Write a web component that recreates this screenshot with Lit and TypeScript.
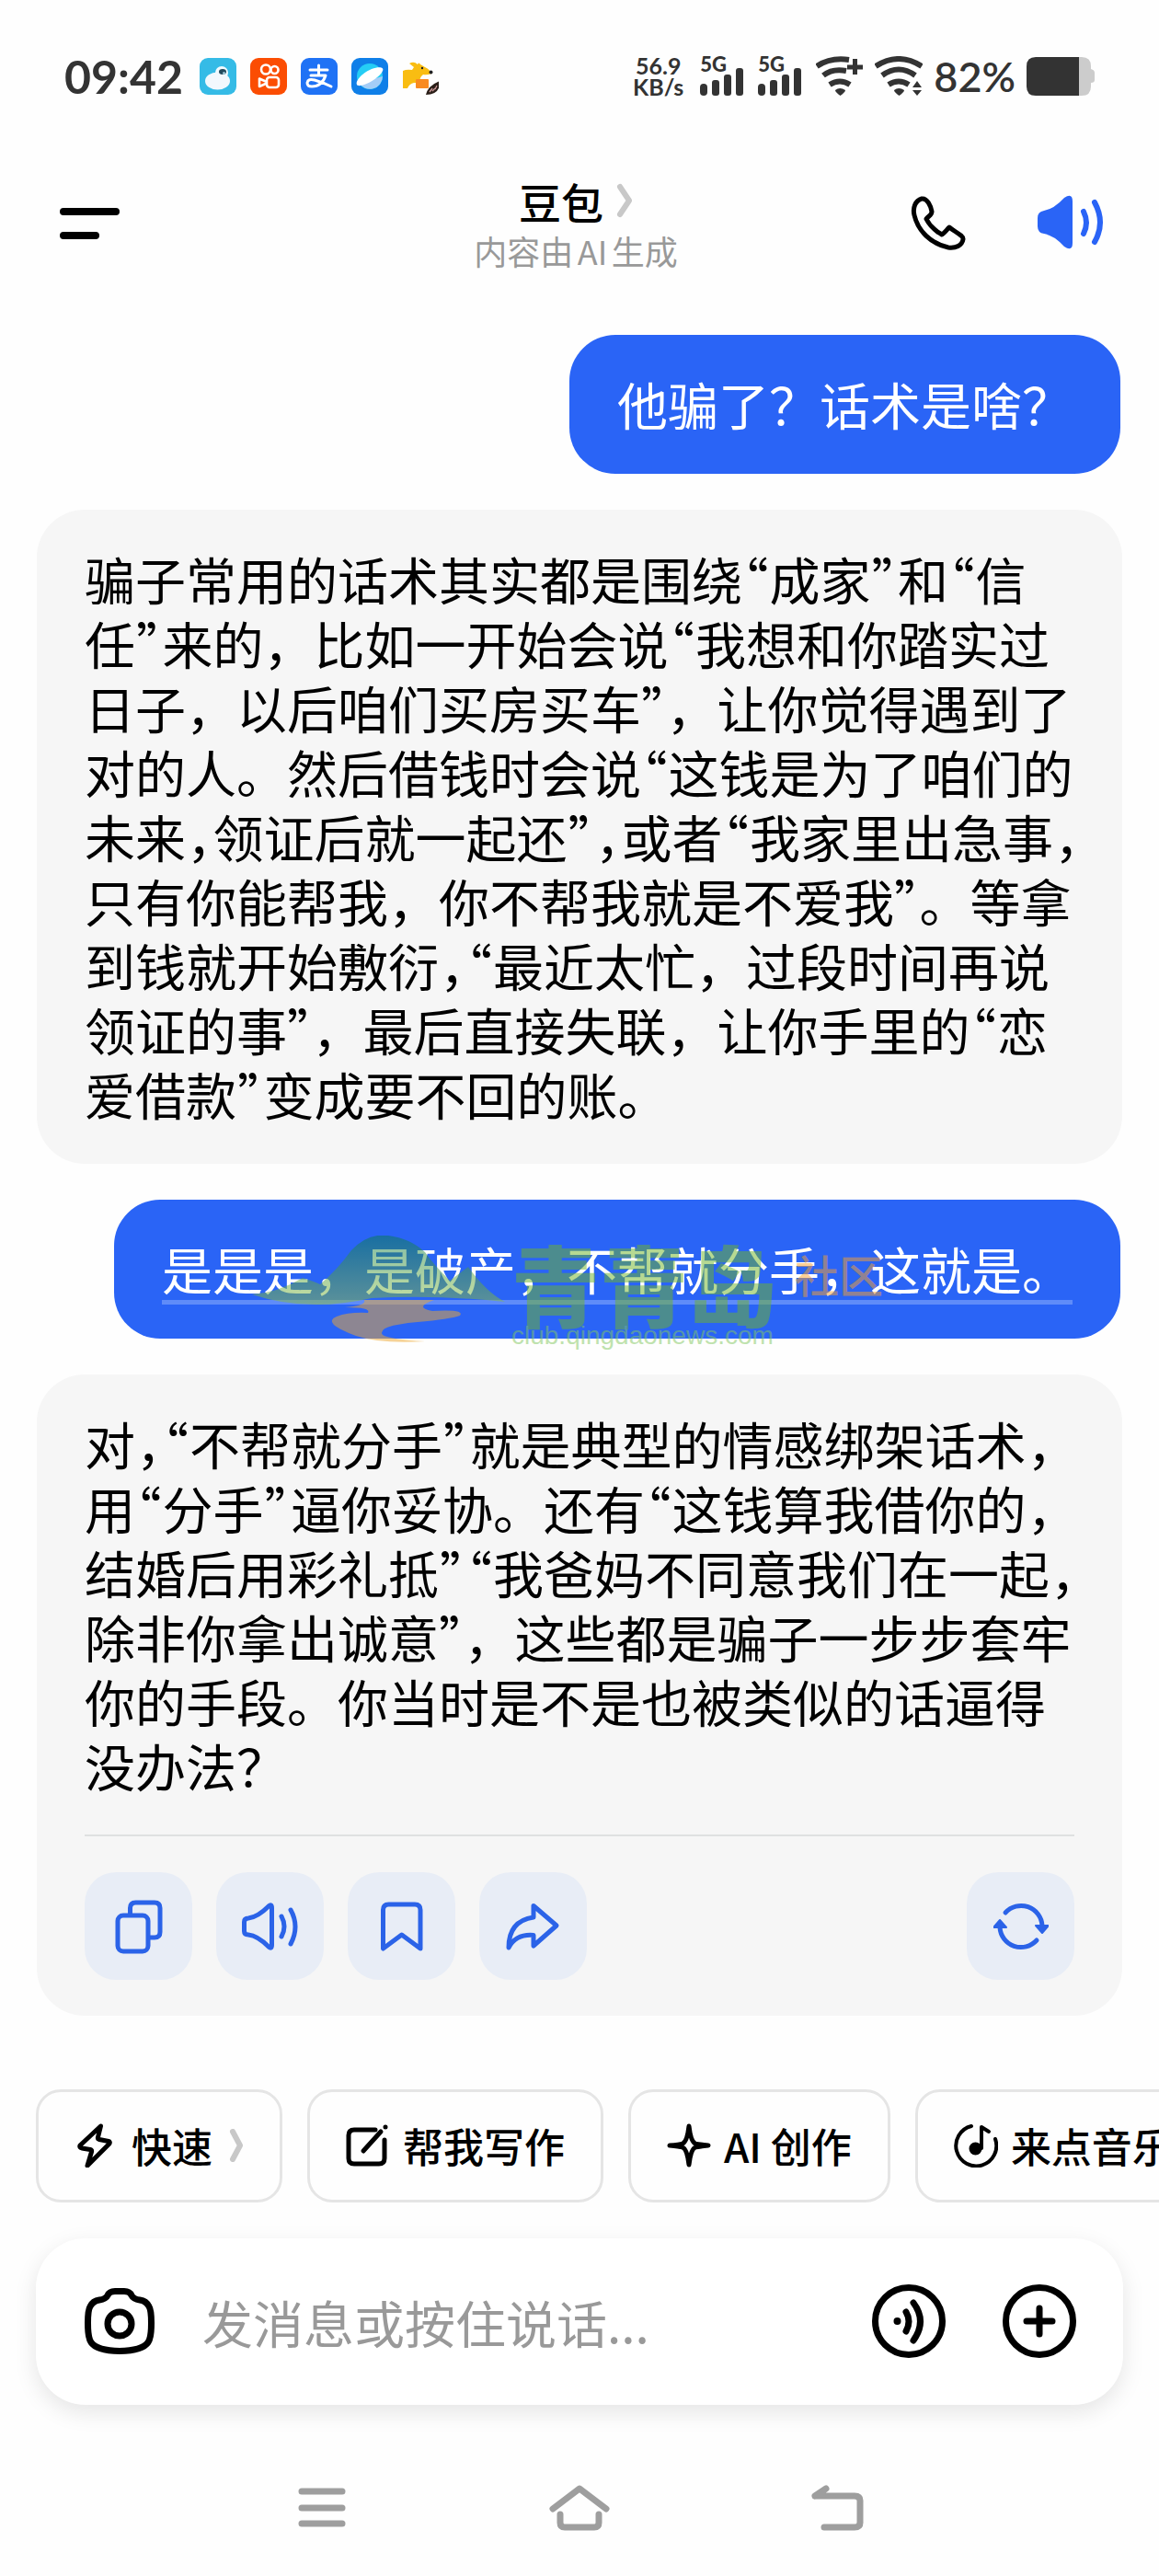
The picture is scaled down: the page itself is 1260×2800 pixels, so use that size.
import { LitElement, html, css, svg, nothing } from "lit";
import { customElement, property } from "lit/decorators.js";

type Message = { from: "me" | "bot"; text: string; actions?: boolean; marked?: boolean };

/* {，} marks a comma set at half width; curly quotes are always half width. */
const messages: Message[] = [
  { from: "me", text: "他骗了？话术是啥？" },
  {
    from: "bot",
    text: [
      "骗子常用的话术其实都是围绕“成家”和“信",
      "任”来的，比如一开始会说“我想和你踏实过",
      "日子，以后咱们买房买车”，让你觉得遇到了",
      "对的人。然后借钱时会说“这钱是为了咱们的",
      "未来{，}领证后就一起还”{，}或者“我家里出急事{，}",
      "只有你能帮我，你不帮我就是不爱我”。等拿",
      "到钱就开始敷衍{，}“最近太忙，过段时间再说",
      "领证的事”，最后直接失联，让你手里的“恋",
      "爱借款”变成要不回的账。",
    ].join("\n"),
  },
  { from: "me", text: "是是是，是破产，不帮就分手，这就是。", marked: true },
  {
    from: "bot",
    actions: true,
    text: [
      "对{，}“不帮就分手”就是典型的情感绑架话术{，}",
      "用“分手”逼你妥协。还有“这钱算我借你的{，}",
      "结婚后用彩礼抵”“我爸妈不同意我们在一起{，}",
      "除非你拿出诚意”，这些都是骗子一步步套牢",
      "你的手段。你当时是不是也被类似的话逼得",
      "没办法？",
    ].join("\n"),
  },
];

const sharedType = css`
  :host {
    font-family: "Noto Sans CJK SC", sans-serif;
    text-spacing-trim: space-all;
    text-autospace: no-autospace;
  }
  button {
    font: inherit;
    color: inherit;
    background: none;
    border: 0;
    margin: 0;
    padding: 0;
    display: flex;
    align-items: center;
    justify-content: center;
  }
  svg {
    display: block;
    flex: none;
  }
`;

const line = (d: unknown, w: number, h: number, stroke: number) => html`
  <svg width=${w} height=${h} viewBox="0 0 ${w} ${h}" fill="none" stroke="currentColor"
    stroke-width=${stroke} stroke-linecap="round" stroke-linejoin="round" aria-hidden="true">${d}</svg>`;

const icons = {
  menu: line(svg`<path d="M4 6H61M4 32H39"/>`, 66, 36, 8),
  chevron: line(svg`<path d="M4 4L14 19L4 34"/>`, 18, 38, 6),
  chevronSmall: line(svg`<path d="M4 3L12 18L4 33"/>`, 16, 36, 6),
  phone: line(svg`<path d="M12 4C5 6 2 14 4 22C8 39 22 53 41 57C49 58 56 55 57 48C57.500 44 48 40 42 35C39 38 37 41 34 43C27 39 20 32 17 26C19 23 23 22 23 18C22 12 18 3 12 4Z"/>`, 60, 60, 5),
  soundOn: line(svg`<path d="M0 25Q0 18 7 17Q18 15 29 3Q38 -3 38 7V52Q38 62 29 56Q18 44 7 42Q0 41 0 34Z" fill="currentColor" stroke="none"/><path d="M50 18Q56 30 50 42M62 8Q74 30 62 51"/>`, 72, 60, 6),
  copy: line(svg`<path d="M20.500 16V10Q20.500 4 26.500 4H47Q53 4 53 10V36Q53 42 47 42H42"/><rect x="7" y="18" width="33" height="39" rx="6"/>`, 60, 60, 5),
  sound: line(svg`<path d="M2.500 25Q2.500 21 7 21Q17 20 29 8Q32.500 5 32.500 10V50Q32.500 55 29 52Q17 40 7 39Q2.500 39 2.500 35Z"/><path d="M43 19Q49 30 43 41M53 12Q63 30 53 49"/>`, 62, 60, 5),
  bookmark: line(svg`<path d="M9.500 54V12Q9.500 6 15.500 6H44Q50 6 50 12V54L29.700 39Z"/>`, 60, 60, 5),
  share: line(svg`<path d="M30 7.500L55 29L30 51V39.500Q11 38 3 53Q3 24 30 20Z"/>`, 60, 60, 5),
  refresh: line(svg`<path d="M13 15A23 23 0 0 1 53 29M7 31A23 23 0 0 0 47 45"/><path d="M46 29H60L53 37ZM0 31H14L7 23Z" fill="currentColor" stroke-width="2"/>`, 60, 60, 5),
  bolt: line(svg`<path d="M28.500 3L6 24Q5 26 8 27L17 28.500Q19 29 18.500 31L14 46L38 22Q39 20 37 19.500L27 17.500Q25 17 25.500 15Z"/>`, 48, 48, 5),
  edit: line(svg`<path d="M32 7H9Q3 7 3 13V38Q3 44 9 44H36Q42 44 42 38V18"/><path d="M19 30L38 9M43 4V4"/>`, 48, 48, 5),
  spark: line(svg`<path d="M24 3Q26 20 31 22Q34 23 45 24Q34 25 31 26Q26 28 24 45Q22 28 17 26Q14 25 3 24Q14 23 17 22Q22 20 24 3Z"/>`, 48, 48, 5),
  music: line(svg`<path d="M19 3A22 22 0 1 0 45 17"/><path d="M30 27V4L38 9"/><circle cx="23.500" cy="27.500" r="5" fill="currentColor"/>`, 48, 48, 4),
  camera: line(svg`<path d="M5.500 42Q5.500 28 8 24Q11 18 18 17Q25 16 27 12Q29 7.500 35 7.500H45Q51 7.500 53 12Q55 16 62 17Q69 18 72 24Q74.500 28 74.500 42Q74.500 58 71 63Q65 72 40 72.500Q15 72 9 63Q5.500 58 5.500 42Z"/><circle cx="40" cy="43" r="13"/>`, 80, 80, 7),
  voice: line(svg`<circle cx="40" cy="40" r="36.500"/><circle cx="27.500" cy="40" r="4" fill="currentColor" stroke="none"/><path d="M37 30Q43 40 37 51M45 20Q60 40 45 61"/>`, 80, 80, 7),
  plus: line(svg`<circle cx="40" cy="40" r="36.500"/><path d="M26 40H54M40 26V54"/>`, 80, 80, 7),
  recents: line(svg`<path d="M5 6H49M5 24H49M5 41H49"/>`, 54, 48, 7),
  home: line(svg`<path d="M4 26L33 4L62 26M12 32V41Q12 46 17 46H49Q54 46 54 41V32"/>`, 66, 50, 7),
  back: line(svg`<path d="M4 12H47Q53 12 53 17V41Q53 46 47 46H14M4 12L16 4"/>`, 57, 50, 7),
};

const appIcon = (label: string, body: unknown) => html`
  <svg width="40" height="40" viewBox="0 0 40 40" role="img" aria-label=${label}>${body}</svg>`;

const appIcons = [
  appIcon("云宠", svg`<rect width="40" height="40" rx="9" fill="#35bbe6"/><circle cx="24" cy="16" r="7" fill="#f2fbff"/><ellipse cx="19.500" cy="25" rx="13.500" ry="9.500" fill="#f2f8fd"/><ellipse cx="25" cy="15" rx="4" ry="3" fill="#21495c"/><circle cx="26.500" cy="16.500" r="1.500" fill="#9fc9d8"/>`),
  appIcon("快手", svg`<rect width="40" height="40" rx="9" fill="#fb4d03"/><g fill="none" stroke="#fff" stroke-width="2.600" stroke-linejoin="round"><circle cx="17" cy="12.500" r="5"/><circle cx="26.500" cy="13" r="4"/><rect x="18" y="21" width="13" height="11" rx="3"/><path d="M18 26L10 22.500V31L18 27.500"/></g>`),
  appIcon("支付", svg`<rect width="40" height="40" rx="9" fill="#1f72f5"/><path d="M10 13H29M19.500 8V19M11 19H27Q23 31 12 31Q7 31 7 27Q8 22 15 24Q25 27 33 31" fill="none" stroke="#fff" stroke-width="3" stroke-linecap="round" stroke-linejoin="round"/>`),
  appIcon("浏览器", svg`<rect width="40" height="40" rx="9" fill="#0f7fe8"/><circle cx="20" cy="20" r="14" fill="#25cdf5"/><path d="M34 20A14 14 0 0 1 8 27Z" fill="#a4cdf7"/><path d="M6 29C4 24 14 15 22 12C30 9 36 10 34 14C32 20 20 27 14 29C10 30 7 31 6 29Z" fill="#fff"/>`),
  appIcon("袋鼠", svg`<path d="M1 14Q5 12 11 13L13 10L8 6Q13 3 17 7Q18 4 20 7L25 10Q31 13 32 17Q27 19 23 18Q18 22 20 27H13Q8 28 6 33H1Z" fill="#f9bd12"/><rect x="15" y="23" width="14" height="10" rx="1" fill="#f98a20"/><circle cx="22" cy="11" r="1.200" fill="#222"/><circle cx="31.500" cy="15.500" r="2" fill="#222"/><path d="M26 40Q28 30 41 25Q42 40 26 40Z" fill="#2a1e18"/><path d="M30 37L33 33M33 36L36 33M36 34L38 30" stroke="#c99" stroke-width="1.300"/>`),
];

const signal = html`
  <svg width="47" height="30" viewBox="0 0 47 30" fill="#333" aria-hidden="true">
    <rect y="17" width="8" height="13" rx="4"/><rect x="13" y="13" width="8" height="17" rx="3"/>
    <rect x="26" y="7" width="8" height="23" rx="3"/><rect x="39" width="8" height="30" rx="3"/>
  </svg>`;

const wifi = (extra: unknown, top: string) => html`
  <svg width="52" height="44" viewBox="0 0 52 44" fill="none" stroke="#333" stroke-width="6" aria-hidden="true">
    <path d=${top}/><path d="M15 31Q26 24 37 31"/>
    <path d="M21 37Q26 33 32 37Q32 39 26.500 43Q21 39 21 37Z" fill="#333" stroke="none"/>${extra}
  </svg>`;

@customElement("status-bar")
export class StatusBar extends LitElement {
  static styles = [sharedType, css`
    :host { display: block; }
    .bar {
      display: flex;
      align-items: center;
      justify-content: space-between;
      height: 58px;
      padding: 54px 70px 0;
      color: #333;
      font-family: Lato, sans-serif;
    }
    .side { display: flex; align-items: center; }
    .apps { display: flex; gap: 15px; margin-left: 18px; }
    .clock { font-size: 50px; font-weight: 700; line-height: 58px; }
    .rate { font-size: 25px; line-height: 23px; font-weight: 700; text-align: center; margin-right: 18px; }
    .rate span { display: block; }
    .cell {
      display: grid;
      width: 48px;
      height: 42px;
      margin-right: 15px;
    }
    .cell > * { grid-area: 1 / 1; }
    .net { font-size: 22px; line-height: 16px; font-weight: 900; }
    .cell svg { align-self: end; }
    .wifi { margin-right: 12px; }
    .percent { font-size: 45px; line-height: 58px; font-weight: 600; margin-right: 12px; }
  `];
  render() {
    return html`<div class="bar">
      <div class="side">
        <span class="clock">09:42</span>
        <div class="apps">${appIcons}</div>
      </div>
      <div class="side">
        <div class="rate"><span>56.9</span><span>KB/s</span></div>
        <div class="cell"><span class="net">5G</span>${signal}</div>
        <div class="cell"><span class="net">5G</span>${signal}</div>
        <div class="wifi">${wifi(svg`<path d="M34 12H51M42.500 3V20" stroke-width="5"/>`, "M1 11Q16 1 36 4M8 21Q18 13 33 16")}</div>
        <div class="wifi">${wifi(svg`<path d="M41 34L46 27L51 34ZM41 37H51L46 43Z" fill="#333" stroke="none"/>`, "M1 11Q26 -5 51 11M8 21Q26 8 44 21")}</div>
        <span class="percent">82%</span>
        <svg width="74" height="42" viewBox="0 0 74 42" aria-hidden="true">
          <path d="M57 0H60Q70 0 70 10V13Q74 14 74 17V25Q74 28 70 28V32Q70 42 60 42H57Z" fill="#ccc"/>
          <path d="M10 0H57V42H10Q0 42 0 32V10Q0 0 10 0Z" fill="#333"/>
        </svg>
      </div>
    </div>`;
  }
}

@customElement("chat-header")
export class ChatHeader extends LitElement {
  static styles = [sharedType, css`
    :host { display: block; }
    .header {
      display: grid;
      grid-template-columns: 1fr auto 1fr;
      align-items: center;
      padding: 78px 60px 0 52px;
    }
    .menu { justify-self: start; padding-left: 13px; }
    .name { display: flex; align-items: center; justify-content: center; gap: 14px; color: #c8c8c8; }
    .title { margin: 0; font-size: 46px; line-height: 56px; font-weight: 500; color: #000; }
    .note {
      margin: 4px 0 0;
      font-size: 36px;
      line-height: 44px;
      color: #999;
      text-align: center;
      text-autospace: normal;
    }
    .tools { display: flex; justify-content: flex-end; gap: 78px; }
    .blue { color: #2a64f6; }
  `];
  render() {
    return html`<header class="header">
      <button class="menu" aria-label="菜单">${icons.menu}</button>
      <div>
        <div class="name"><h1 class="title">豆包</h1>${icons.chevron}</div>
        <p class="note">内容由AI生成</p>
      </div>
      <div class="tools">
        <button aria-label="通话">${icons.phone}</button>
        <button class="blue" aria-label="朗读">${icons.soundOn}</button>
      </div>
    </header>`;
  }
}

@customElement("site-mark")
export class SiteMark extends LitElement {
  static styles = [sharedType, css`
    :host { display: flex; gap: 7px; opacity: 0.5; pointer-events: none; white-space: nowrap; }
    .words { padding-top: 3px; }
    .row { display: flex; gap: 20px; align-items: center; height: 96px; }
    .big { font-size: 96px; line-height: 96px; font-weight: 900; color: #6fb528; }
    .small { font-size: 48px; line-height: 76px; align-self: start; font-weight: 500; color: #f8a030; }
    .url { display: block; font-family: "Liberation Sans", sans-serif; font-size: 28px; line-height: 20px; color: #82c860; }
  `];
  render() {
    return html`
      <svg width="275" height="118" viewBox="0 0 275 118" aria-hidden="true">
        <defs>
          <linearGradient id="hill" x1="0" y1="0" x2="0" y2="1">
            <stop offset="0" stop-color="#087a50"/><stop offset="1" stop-color="#8fc040"/>
          </linearGradient>
        </defs>
        <path d="M0 64Q28 62 55 46Q68 50 74 53Q92 38 108 16Q126 -3 148 0Q172 3 188 18Q196 30 215 49L235 34Q255 62 275 72Q200 64 130 68Q60 84 0 64Z" fill="url(#hill)"/>
        <path d="M122 70H198Q175 78 196 82Q232 80 226 87Q215 91 180 94Q135 98 142 108Q150 113 188 115Q140 118 113 109Q75 95 92 88Q105 83 126 84Q130 78 101 78Q125 76 122 70Z" fill="#efa830"/>
      </svg>
      <div class="words">
        <div class="row"><span class="big">青青岛</span><span class="small">社区</span></div>
        <span class="url">club.qingdaonews.com</span>
      </div>`;
  }
}

@customElement("chat-message")
export class ChatMessage extends LitElement {
  @property({ attribute: false }) message!: Message;

  static styles = [sharedType, css`
    :host { display: flex; font-size: 55px; line-height: 70px; }
    .bubble {
      position: relative;
      margin-left: auto;
      margin-right: 2px;
      padding: 39px 52px 42px;
      border-radius: 50px;
      background: #2a64f6;
      color: #fff;
    }
    .card {
      flex: 1;
      min-width: 0;
      padding: 39px 52px 42px;
      border-radius: 52px;
      background: #f6f6f6;
      color: #000;
    }
    .card.with-actions { padding-bottom: 39px; }
    .text { margin: 0; white-space: pre-line; }
    .card .text { margin-right: -24px; }
    .text.marked { border-bottom: 5px solid #5f8cf9; margin-bottom: -5px; }
    .half { font-feature-settings: "halt"; padding: 0 1px; }
    .half.tight { padding: 0; }
    .mark { position: absolute; left: 150px; top: 39px; }
    .actions {
      display: flex;
      gap: 26px;
      margin-top: 41px;
      padding-top: 39px;
      border-top: 2px solid #dfe1e1;
    }
    .action {
      width: 117px;
      height: 117px;
      border-radius: 34px;
      background: #e8edf6;
      color: #2b63e8;
    }
    .action:last-child { margin-left: auto; }
  `];

  /* A closing quote directly before full-width punctuation carries no side space. */
  private typeset(text: string) {
    return text.split(/(\{，\}|”(?=[，。{])|[“”])/).map((part, i, all) => {
      if (!/^(\{，\}|[“”])$/.test(part)) return part;
      const tight = part === "”" && /^([，。])/.test(all[i + 1] ?? "");
      return html`<span class="half ${tight ? "tight" : ""}">${part.replace(/[{}]/g, "")}</span>`;
    });
  }

  render() {
    const m = this.message;
    if (m.from === "me") {
      return html`<div class="bubble">
        <p class="text ${m.marked ? "marked" : ""}">${this.typeset(m.text)}</p>
        ${m.marked ? html`<site-mark class="mark"></site-mark>` : nothing}
      </div>`;
    }
    return html`<div class="card ${m.actions ? "with-actions" : ""}">
      <p class="text">${this.typeset(m.text)}</p>
      ${m.actions ? html`<div class="actions">
        <button class="action" aria-label="复制">${icons.copy}</button>
        <button class="action" aria-label="朗读">${icons.sound}</button>
        <button class="action" aria-label="收藏">${icons.bookmark}</button>
        <button class="action" aria-label="分享">${icons.share}</button>
        <button class="action" aria-label="重新生成">${icons.refresh}</button>
      </div>` : nothing}
    </div>`;
  }
}

@customElement("chat-composer")
export class ChatComposer extends LitElement {
  static styles = [sharedType, css`
    :host { display: block; }
    .chips {
      display: flex;
      gap: 27px;
      padding-left: 39px;
      overflow: hidden;
    }
    .chip {
      flex: none;
      box-sizing: border-box;
      height: 123px;
      padding: 0 39px 2px;
      gap: 14px;
      border: 3px solid #e5e5e5;
      border-radius: 27px;
      font-size: 44px;
      line-height: 64px;
      font-weight: 500;
      white-space: nowrap;
      color: #000;
    }
    .more { color: #c8c8c8; margin-left: 4px; }
    .box {
      display: flex;
      align-items: center;
      margin: 39px 39px 0;
      padding: 50px 51px 51px;
      border-radius: 54px;
      background: #fff;
      box-shadow: 0 8px 24px rgba(0, 0, 0, 0.1);
    }
    .input {
      flex: 1;
      min-width: 0;
      height: 80px;
      margin: 0 40px 0 50px;
      padding: 0;
      border: 0;
      outline: 0;
      background: none;
      font: inherit;
      font-size: 55px;
      color: #000;
    }
    .input::placeholder { color: #999; opacity: 1; }
    .plus { margin-left: 62px; }
  `];
  render() {
    return html`
      <div class="chips">
        <button class="chip">${icons.bolt}快速<span class="more">${icons.chevronSmall}</span></button>
        <button class="chip">${icons.edit}帮我写作</button>
        <button class="chip">${icons.spark}AI 创作</button>
        <button class="chip">${icons.music}来点音乐</button>
      </div>
      <div class="box">
        <button aria-label="拍照">${icons.camera}</button>
        <input class="input" type="text" aria-label="发消息" placeholder="发消息或按住说话..." />
        <button aria-label="语音">${icons.voice}</button>
        <button class="plus" aria-label="更多">${icons.plus}</button>
      </div>`;
  }
}

@customElement("app-root")
export class AppRoot extends LitElement {
  static styles = [sharedType, css`
    :host { display: block; min-height: 100vh; background: #fefefe; overflow: hidden; }
    .chat {
      display: flex;
      flex-direction: column;
      gap: 39px;
      padding: 70px 40px 80px;
    }
    .nav {
      display: grid;
      grid-template-columns: repeat(3, 1fr);
      max-width: 840px;
      margin: 0 auto;
      padding: 87px 0 48px;
      color: #9e9e9e;
    }
  `];
  render() {
    return html`
      <status-bar></status-bar>
      <chat-header></chat-header>
      <main class="chat" lang="zh-CN">
        ${messages.map((m) => html`<chat-message .message=${m}></chat-message>`)}
      </main>
      <chat-composer></chat-composer>
      <nav class="nav">
        <button aria-label="最近任务">${icons.recents}</button>
        <button aria-label="主屏幕">${icons.home}</button>
        <button aria-label="返回">${icons.back}</button>
      </nav>`;
  }
}
